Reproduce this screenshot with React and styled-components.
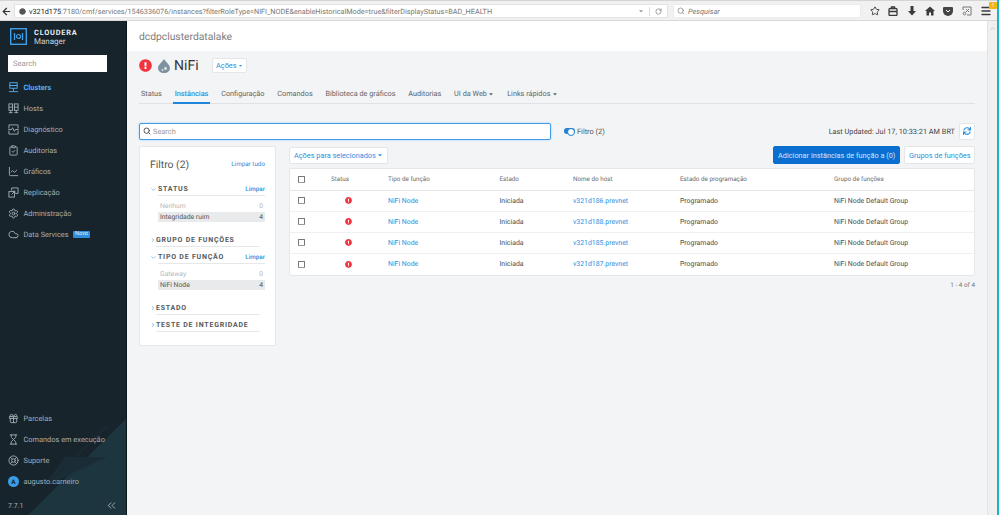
import React from 'react';
import styled, { createGlobalStyle } from 'styled-components';
import {
  ArrowLeft, Search, Star, ClipboardCheck, LineChart, Settings, Cloud,
  Gift, Hourglass, LifeBuoy, ChevronsLeft, ChevronDown, ChevronRight, RotateCw, Menu, Info,
} from 'lucide-react';
import { FaExclamationCircle, FaSync, FaCaretDown } from 'react-icons/fa';

const GlobalStyle = createGlobalStyle`
  html, body { margin: 0; height: 100%; }
  body {
    font-family: Roboto, "Liberation Sans", sans-serif;
    background: #f3f4f6;
    overflow: hidden;
    text-rendering: geometricPrecision;
  }
  #root { height: 100%; }
  * { box-sizing: border-box; }
`;

const Page = styled.div`
  display: flex;
  width: 999px;
  height: 515px;
  border-right: 2px solid #17b4cb;
`;

const Window = styled.div`
  flex: 1;
  display: flex;
  flex-direction: column;
  min-width: 0;
`;

const BrowserBar = styled.div`
  height: 21px;
  flex: none;
  display: flex;
  align-items: center;
  gap: 2px;
  padding: 3px 0 2px 1px;
  background: #f1f1f1;
  border-top: 1px solid #d4d4d4;
  border-bottom: 1px solid #d8d8d8;
`;

const BackButton = styled.div`
  width: 11px;
  display: flex;
  justify-content: center;
  color: #333;
`;

const UrlBar = styled.div`
  width: 654px;
  height: 14px;
  background: #fff;
  border: 1px solid #e2e2e2;
  display: flex;
  align-items: center;
  padding: 0 5px 0 4px;
  font-size: 7.26px;
  color: #777;
  white-space: nowrap;
  overflow: hidden;
  b { font-weight: 400; color: #222; }
`;

const UrlIcons = styled.div`
  margin-left: auto;
  display: flex;
  align-items: center;
  gap: 5px;
  color: #999;
  font-size: 6px;
`;

const UrlDivider = styled.span`
  width: 1px;
  height: 9px;
  background: #ddd;
`;

const SearchBar = styled.div`
  width: 188px;
  height: 14px;
  margin-left: 3px;
  background: #fff;
  border: 1px solid #ececec;
  display: flex;
  align-items: center;
  gap: 3px;
  padding-left: 3px;
  font-size: 7.4px;
  font-style: italic;
  color: #777;
`;

const Toolbar = styled.div`
  flex: 1;
  display: flex;
  align-items: center;
  justify-content: space-between;
  padding: 0 5px 0 7px;
  color: #3b3b3b;
  position: relative;
`;

const UpdateBadge = styled.span`
  position: absolute;
  right: 0;
  top: -3px;
  width: 8px;
  height: 7px;
  border-radius: 1px;
  background: #f5b50c;
  color: #fff;
  font-size: 6px;
  line-height: 7px;
  text-align: center;
`;

const Body = styled.div`
  flex: 1;
  display: flex;
  min-height: 0;
`;

const Sidebar = styled.aside`
  width: 127px;
  flex: none;
  position: relative;
  display: flex;
  flex-direction: column;
  justify-content: space-between;
  background: #17242c;
  border-right: 1px solid #0d161b;
  color: #aeb7bc;
  overflow: hidden;
`;

const SidebarArt = styled.svg`
  position: absolute;
  left: 0;
  bottom: 0;
`;

const SidebarTop = styled.div`
  position: relative;
`;

const SidebarBottom = styled.div`
  position: relative;
`;

const Brand = styled.div`
  display: flex;
  align-items: center;
  gap: 7px;
  height: 31px;
  padding-left: 10px;
`;

const BrandName = styled.div`
  font-size: 8px;
  line-height: 9px;
  color: #c9d0d4;
  b { display: block; font-weight: 700; letter-spacing: 0.8px; color: #e8ecee; font-size: 7.4px; }
`;

const SideSearch = styled.div`
  margin: 3px 0 0 8px;
  width: 99px;
  height: 17px;
  background: #fff;
  display: flex;
  align-items: center;
  padding-left: 5px;
  font-size: 7.6px;
  color: #9a9a9a;
`;

const NavList = styled.nav`
  margin-top: 4.5px;
`;

const NavItem = styled.div`
  height: 21px;
  display: flex;
  align-items: center;
  gap: 4.5px;
  padding-left: 8px;
  font-size: 7.4px;
  font-weight: ${p => (p.$active ? 700 : 400)};
  color: ${p => (p.$active ? '#54aef0' : '#a3adb3')};
  white-space: nowrap;
`;

const NavIcon = styled.span`
  width: 11px;
  height: 11px;
  flex: none;
  display: flex;
  align-items: center;
  justify-content: center;
`;

const NewTag = styled.span`
  background: #2f8fdc;
  color: #dceefc;
  font-size: 5.6px;
  line-height: 7px;
  padding: 0 2px;
  border-radius: 1px;
`;

const Avatar = styled.span`
  width: 11px;
  height: 11px;
  border-radius: 50%;
  background: #3b9de8;
  color: #10222e;
  font-size: 6.5px;
  font-weight: 700;
  display: flex;
  align-items: center;
  justify-content: center;
`;

const SideFooter = styled.div`
  height: 23px;
  display: flex;
  align-items: center;
  justify-content: space-between;
  padding: 4px 8px 0 8px;
  font-size: 7px;
  color: #a3adb3;
  svg { color: #c8d0d4; }
`;

const Main = styled.main`
  flex: 1;
  min-width: 0;
  display: flex;
  flex-direction: column;
`;

const ClusterHeader = styled.header`
  height: 30px;
  flex: none;
  background: #fff;
  display: flex;
  align-items: center;
  padding-left: 12px;
  font-size: 10.3px;
  color: #7d7d7d;
`;

const Content = styled.div`
  flex: 1;
  padding: 0 12px;
`;

const ServiceTitle = styled.div`
  height: 28px;
  display: flex;
  align-items: center;
  padding-top: 1px;
`;

const ServiceName = styled.h1`
  margin: 0 13px 0 4px;
  font-size: 14px;
  font-weight: 400;
  color: #333;
`;

const DropIcon = styled.svg`
  margin-left: 6px;
`;

const Button = styled.button`
  height: ${p => p.$height || 17}px;
  display: inline-flex;
  align-items: center;
  gap: 1px;
  padding: 0 ${p => p.$pad || 4}px;
  font-family: inherit;
  font-size: 7.33px;
  color: ${p => (p.$primary ? '#cfe6fb' : '#2d8fe0')};
  background: ${p => (p.$primary ? '#0a6fd0' : '#fff')};
  border: 1px solid ${p => (p.$primary ? '#0a6fd0' : '#e4e6e8')};
  border-radius: 2px;
  white-space: nowrap;
`;

const Tabs = styled.div`
  height: 25px;
  display: flex;
  gap: 12.8px;
  padding-left: 2px;
  padding-top: 5px;
  border-bottom: 1px solid #dfe1e4;
`;

const Tab = styled.div`
  position: relative;
  display: flex;
  align-items: center;
  gap: 1.5px;
  font-size: 7.3px;
  font-weight: ${p => (p.$active ? 500 : 400)};
  color: ${p => (p.$active ? '#2d8fe0' : '#5f6468')};
  &::after {
    content: '';
    display: ${p => (p.$active ? 'block' : 'none')};
    position: absolute;
    left: -2px;
    right: -2px;
    bottom: -1px;
    height: 2px;
    background: #1f86dc;
  }
`;

const SearchRow = styled.div`
  margin-top: 18px;
  height: 18px;
  display: flex;
  align-items: center;
`;

const SearchField = styled.div`
  width: 412px;
  height: 17px;
  background: #fff;
  border: 1px solid #3f9ce6;
  box-shadow: 0 0 2px #8cc7f5;
  border-radius: 2px;
  display: flex;
  align-items: center;
  gap: 2px;
  padding-left: 3px;
  font-size: 7.4px;
  color: #999;
`;

const ToggleWrap = styled.div`
  margin-left: 13px;
  display: flex;
  align-items: center;
  gap: 2px;
  font-size: 7.4px;
  color: #555;
`;

const Toggle = styled.span`
  position: relative;
  width: 11px;
  height: 6px;
  border-radius: 3px;
  background: #1f7fd4;
  &::after {
    content: '';
    position: absolute;
    right: 0;
    top: 0;
    width: 6px;
    height: 6px;
    border-radius: 50%;
    background: #fff;
    border: 1px solid #1f7fd4;
  }
`;

const LastUpdated = styled.div`
  margin-left: auto;
  display: flex;
  align-items: center;
  gap: 4px;
  font-size: 7.33px;
  color: #444;
`;

const Columns = styled.div`
  margin-top: 6px;
  display: flex;
  align-items: flex-start;
  gap: 13px;
`;

const FilterPanel = styled.section`
  width: 137px;
  height: 200px;
  flex: none;
  background: #fff;
  border: 1px solid #e6e7e9;
  border-radius: 2px;
  padding: 10px 10px 0 10px;
`;

const FilterTitle = styled.div`
  display: flex;
  justify-content: space-between;
  align-items: center;
  font-size: 10.4px;
  color: #555;
  margin-bottom: 11px;
  height: 14px;
`;

const ClearLink = styled.span`
  font-size: 6.3px;
  letter-spacing: 0;
  font-weight: ${p => (p.$bold ? 500 : 400)};
  color: #2d8fe0;
`;

const FilterGroup = styled.div`
  margin-bottom: 3px;
`;

const FilterHead = styled.div`
  height: 14px;
  display: flex;
  align-items: center;
  color: #4d9fdd;
  svg { flex: none; }
`;

const FilterHeadInner = styled.div`
  flex: 1;
  height: 14px;
  margin-right: ${p => (p.$open ? 0 : 5)}px;
  margin-left: ${p => (p.$open ? 1 : 0)}px;
  display: flex;
  align-items: center;
  justify-content: space-between;
  border-bottom: 1px solid #e6e7e9;
  font-size: 7px;
  font-weight: 700;
  letter-spacing: 0.78px;
  color: #555b60;
  white-space: nowrap;
`;

const Options = styled.div`
  margin: 5px 0 11px 8px;
`;

const Option = styled.div`
  height: 10.5px;
  display: flex;
  align-items: center;
  justify-content: space-between;
  padding: 0 2px;
  font-size: 6.8px;
  color: ${p => (p.$on ? '#555' : '#b5b8bb')};
  background: ${p => (p.$on ? '#e9eaec' : 'transparent')};
`;

const TablePanel = styled.section`
  flex: 1;
  min-width: 0;
`;

const ActionsRow = styled.div`
  height: 18px;
  display: flex;
  align-items: center;
  gap: 4px;
  margin-bottom: 4px;
`;

const Spacer = styled.div`
  flex: 1;
`;

const Grid = styled.div`
  background: #fff;
  border: 1px solid #e6e7e9;
  border-radius: 2px;
`;

const Row = styled.div`
  display: grid;
  grid-template-columns: 41px 57px 111.5px 73.5px 107px 154px 1fr;
  height: ${p => (p.$head ? 21.5 : 21)}px;
  align-items: center;
  font-size: 6.9px;
  color: #4c4f52;
  border-bottom: ${p => (p.$head ? '1px solid #e6e7e9' : p.$last ? '0' : '1px solid #eef0f1')};
`;

const HeadCell = styled.div`
  font-size: 6.3px;
  color: #6a6d70;
`;

const LinkCell = styled.div`
  color: #2d8fe0;
`;

const CheckCell = styled.div`
  display: flex;
  padding-left: 8px;
`;

const Checkbox = styled.span`
  width: 7px;
  height: 7px;
  border: 1px solid #777;
  border-bottom-color: #999;
  border-radius: 1px;
`;

const StatusCell = styled.div`
  display: flex;
  padding-left: 14px;
  color: #f5333f;
`;

const Pager = styled.div`
  margin-top: 5px;
  text-align: right;
  font-size: 6.4px;
  color: #777;
`;

const Scrollbar = styled.div`
  width: 10px;
  flex: none;
  background: #f0f0f0;
  border-left: 1px solid #e3e3e3;
  display: flex;
  justify-content: center;
  padding-top: 4px;
  color: #b0b0b0;
`;

function IconClusters() {
  return (
    <svg width="11" height="11" viewBox="0 0 12 12" fill="none" stroke="currentColor">
      <rect x="2" y="0.8" width="8" height="3" />
      <rect x="2" y="3.8" width="8" height="3" />
      <path d="M6 6.8v3.4M1 10.5h10" />
    </svg>
  );
}

function IconHosts() {
  return (
    <svg width="11" height="11" viewBox="0 0 12 12" fill="none" stroke="currentColor">
      <rect x="1" y="1" width="4" height="7" />
      <rect x="7" y="1" width="4" height="7" />
      <path d="M3 8v3M9 8v3M1 10.5h4M7 10.5h4M1 4.5h4M7 4.5h4" />
    </svg>
  );
}

function IconDiagnostics() {
  return (
    <svg width="11" height="11" viewBox="0 0 12 12" fill="none" stroke="currentColor">
      <path d="M1 5V1h10v4M1 7v4h10V7" />
      <path d="M0.5 6H4l1-2 2 4 1-2h3.5" />
    </svg>
  );
}

function IconReplication() {
  return (
    <svg width="11" height="11" viewBox="0 0 12 12" fill="none" stroke="currentColor">
      <path d="M4 4V1h7v6H8" />
      <rect x="1" y="5" width="6" height="6" />
      <path d="M4 8l3.5-3.5M5.5 4.5h2v2" />
    </svg>
  );
}

function LogoMark() {
  return (
    <svg width="17" height="17" viewBox="0 0 17 17" fill="none" stroke="#3f9fe8">
      <rect x="0.7" y="0.7" width="15.6" height="15.6" strokeWidth="1.4" />
      <path d="M4.5 5v7M12.5 5v7" strokeWidth="1.3" />
      <circle cx="8.5" cy="8.5" r="2" strokeWidth="1.2" />
    </svg>
  );
}

const topNav = [
  ['Clusters', <IconClusters />, true],
  ['Hosts', <IconHosts />],
  ['Diagnóstico', <IconDiagnostics />],
  ['Auditorias', <ClipboardCheck size={11} />],
  ['Gráficos', <LineChart size={11} />],
  ['Replicação', <IconReplication />],
  ['Administração', <Settings size={11} />],
];

const bottomNav = [
  ['Parcelas', <Gift size={11} />],
  ['Comandos em execução', <Hourglass size={11} />],
  ['Suporte', <LifeBuoy size={11} />],
];

const hosts = ['v321d186.prevnet', 'v321d188.prevnet', 'v321d185.prevnet', 'v321d187.prevnet'];

function FilterSection({ title, open, clear, options }) {
  return (
    <FilterGroup>
      <FilterHead>
        {open ? <ChevronDown size={7} strokeWidth={2} /> : <ChevronRight size={6} strokeWidth={3} />}
        <FilterHeadInner $open={open}>
          {title}
          {clear && <ClearLink $bold>Limpar</ClearLink>}
        </FilterHeadInner>
      </FilterHead>
      {options && (
        <Options>
          {options.map(o => (
            <Option key={o[0]} $on={o[1] > 0}>
              <span>{o[0]}</span>
              <span>{o[1]}</span>
            </Option>
          ))}
        </Options>
      )}
    </FilterGroup>
  );
}

export default function App() {
  return (
    <Page>
      <GlobalStyle />
      <Window>
        <BrowserBar>
          <BackButton><ArrowLeft size={11} strokeWidth={2.6} /></BackButton>
          <UrlBar>
            <Info size={7} color="#555" fill="#555" style={{ marginRight: 3, flex: 'none' }} />
            <b>v321d175</b>:7180/cmf/services/1546336076/instances?filterRoleType=NIFI_NODE&amp;enableHistoricalMode=true&amp;filterDisplayStatus=BAD_HEALTH
            <UrlIcons>
              <FaCaretDown />
              <UrlDivider />
              <RotateCw size={7} color="#666" />
            </UrlIcons>
          </UrlBar>
          <SearchBar><Search size={8} />Pesquisar</SearchBar>
          <Toolbar>
            <Star size={10} strokeWidth={2.2} />
            <svg width="10" height="10" viewBox="0 0 10 10" fill="none" stroke="#3b3b3b" strokeWidth="1.3"><rect x="1" y="2.5" width="8" height="7" rx="1" /><path d="M3.5 2.5V1h3v1.5M1 5.5h8" /></svg>
            <svg width="10" height="10" viewBox="0 0 10 10" fill="#3b3b3b"><path d="M3.5 0h3v5H9L5 9.5 1 5h2.5z" /></svg>
            <svg width="10" height="10" viewBox="0 0 10 10" fill="#3b3b3b"><path d="M5 0.5L0 5h1.5v4.5H4V6.5h2v3h2.5V5H10z" /></svg>
            <svg width="10" height="9" viewBox="0 0 10 9"><path d="M1 0h8a1 1 0 0 1 1 1v3a5 5 0 0 1-10 0V1a1 1 0 0 1 1-1z" fill="#444" /><path d="M3 3l2 2 2-2" stroke="#fff" fill="none" /></svg>
            <svg width="10" height="10" viewBox="0 0 10 10" fill="none" stroke="#777"><path d="M1 4V1h8v8H5" /><circle cx="2.5" cy="7.5" r="1.3" /><path d="M4 6l3-3M4 3l3 3" /></svg>
            <Menu size={12} strokeWidth={2.6} />
            <UpdateBadge>!</UpdateBadge>
          </Toolbar>
        </BrowserBar>
        <Body>
          <Sidebar>
            <SidebarArt width="127" height="100" viewBox="0 0 127 100">
              <path d="M127 3V100H28z" fill="#1c353f" />
              <path d="M107 42H65L43 72z" fill="#1a2c35" />
              <path d="M105 12L40 75L28 87L112 8z" fill="#1b2a33" />
            </SidebarArt>
            <SidebarTop>
              <Brand>
                <LogoMark />
                <BrandName><b>CLOUDERA</b>Manager</BrandName>
              </Brand>
              <SideSearch>Search</SideSearch>
              <NavList>
                {topNav.map(([label, icon, active]) => (
                  <NavItem key={label} $active={active}>
                    <NavIcon>{icon}</NavIcon>{label}
                  </NavItem>
                ))}
                <NavItem>
                  <NavIcon><Cloud size={11} /></NavIcon>Data Services <NewTag>Novo</NewTag>
                </NavItem>
              </NavList>
            </SidebarTop>
            <SidebarBottom>
              {bottomNav.map(([label, icon]) => (
                <NavItem key={label}>
                  <NavIcon>{icon}</NavIcon>{label}
                </NavItem>
              ))}
              <NavItem><Avatar>A</Avatar>augusto.carneiro</NavItem>
              <SideFooter>
                7.7.1
                <ChevronsLeft size={13} strokeWidth={1.4} />
              </SideFooter>
            </SidebarBottom>
          </Sidebar>
          <Main>
            <ClusterHeader>dcdpclusterdatalake</ClusterHeader>
            <Content>
              <ServiceTitle>
                <FaExclamationCircle size={13} color="#f5333f" />
                <DropIcon width="12" height="14" viewBox="0 0 12 14">
                  <path d="M6 0C8 3 12 6 12 9.2A5.6 4.8 0 0 1 6 14 5.6 4.8 0 0 1 0 9.2C0 6 4 3 6 0z" fill="#7f929f" />
                  <circle cx="7.5" cy="9.5" r="1.4" fill="#dfe5e9" />
                  <circle cx="4.5" cy="11" r="0.9" fill="#dfe5e9" />
                </DropIcon>
                <ServiceName>NiFi</ServiceName>
                <Button $height={15} $pad={3.5}>Ações<FaCaretDown size={5} /></Button>
              </ServiceTitle>
              <Tabs>
                <Tab>Status</Tab>
                <Tab $active>Instâncias</Tab>
                <Tab>Configuração</Tab>
                <Tab>Comandos</Tab>
                <Tab>Biblioteca de gráficos</Tab>
                <Tab>Auditorias</Tab>
                <Tab>UI da Web<FaCaretDown size={6} /></Tab>
                <Tab>Links rápidos<FaCaretDown size={6} /></Tab>
              </Tabs>
              <SearchRow>
                <SearchField><Search size={8} color="#555" strokeWidth={3} />Search</SearchField>
                <ToggleWrap><Toggle />Filtro (2)</ToggleWrap>
                <LastUpdated>
                  Last Updated: Jul 17, 10:33:21 AM BRT
                  <Button $pad={3}><FaSync size={8} /></Button>
                </LastUpdated>
              </SearchRow>
              <Columns>
                <FilterPanel>
                  <FilterTitle>Filtro (2)<ClearLink>Limpar tudo</ClearLink></FilterTitle>
                  <FilterSection title="STATUS" open clear options={[['Nenhum', 0], ['Integridade ruim', 4]]} />
                  <FilterSection title="GRUPO DE FUNÇÕES" />
                  <FilterSection title="TIPO DE FUNÇÃO" open clear options={[['Gateway', 0], ['NiFi Node', 4]]} />
                  <FilterSection title="ESTADO" />
                  <FilterSection title="TESTE DE INTEGRIDADE" />
                </FilterPanel>
                <TablePanel>
                  <ActionsRow>
                    <Button>Ações para selecionados<FaCaretDown size={6} /></Button>
                    <Spacer />
                    <Button $primary $height={18}>Adicionar instâncias de função a (0)</Button>
                    <Button $height={18} $pad={3.5}>Grupos de funções</Button>
                  </ActionsRow>
                  <Grid>
                    <Row $head>
                      <CheckCell><Checkbox /></CheckCell>
                      <HeadCell>Status</HeadCell>
                      <HeadCell>Tipo de função</HeadCell>
                      <HeadCell>Estado</HeadCell>
                      <HeadCell>Nome do host</HeadCell>
                      <HeadCell>Estado de programação</HeadCell>
                      <HeadCell>Grupo de funções</HeadCell>
                    </Row>
                    {hosts.map((host, i) => (
                      <Row key={host} $last={i === hosts.length - 1}>
                        <CheckCell><Checkbox /></CheckCell>
                        <StatusCell><FaExclamationCircle size={7} /></StatusCell>
                        <LinkCell>NiFi Node</LinkCell>
                        <div>Iniciada</div>
                        <LinkCell>{host}</LinkCell>
                        <div>Programado</div>
                        <div>NiFi Node Default Group</div>
                      </Row>
                    ))}
                  </Grid>
                  <Pager>1 - 4 of 4</Pager>
                </TablePanel>
              </Columns>
            </Content>
          </Main>
          <Scrollbar><ChevronDown size={7} style={{ transform: 'rotate(180deg)' }} /></Scrollbar>
        </Body>
      </Window>
    </Page>
  );
}
